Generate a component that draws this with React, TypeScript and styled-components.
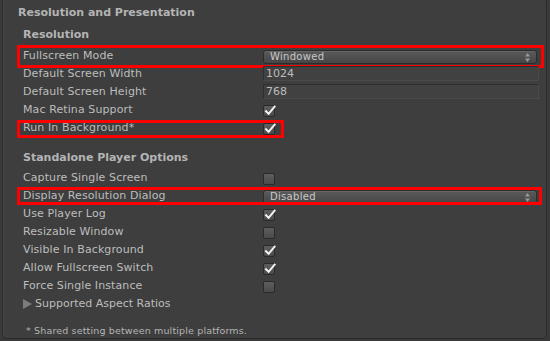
import React from 'react'
import styled, { createGlobalStyle, css } from 'styled-components'

const GlobalStyle = createGlobalStyle`
  html, body {
    margin: 0;
    padding: 0;
    background: #3a3a3a;
    overflow: hidden;
  }
  body {
    font-family: 'DejaVu Sans', 'Liberation Sans', sans-serif;
    font-size: 11px;
    color: #bdbdbd;
  }
`

const Panel = styled.div`
  box-sizing: border-box;
  width: 545px;
  height: 341px;
  margin: -2px 0 0 2px;
  background: #3e3e3e;
  border: 1px solid #2a2a2a;
  border-radius: 4px;
  box-shadow: inset 1px 1px 0 #474747;
  padding: 5px 0 0 14px;
`

const SectionTitle = styled.div`
  height: 22px;
  line-height: 18px;
  font-weight: bold;
  color: #b4b4b4;
  padding-left: 1px;
`

const GroupTitle = styled.div<{ $h: number }>`
  height: ${({ $h }) => $h}px;
  line-height: 18px;
  font-weight: bold;
  color: #b4b4b4;
  padding-left: 6px;
`

type Box = { top: number; bottom: number; width: number }

const Row = styled.div<{ $box?: Box }>`
  position: relative;
  display: flex;
  align-items: center;
  height: 18px;
  line-height: 18px;
  padding-left: 6px;
  width: 522px;

  ${({ $box }) =>
    $box &&
    css`
      &::after {
        content: '';
        position: absolute;
        left: 0;
        top: ${$box.top}px;
        bottom: ${$box.bottom}px;
        width: ${$box.width}px;
        box-sizing: border-box;
        border: 3px solid #ff0000;
        pointer-events: none;
      }
    `}
`

const Label = styled.div`
  width: 240px;
  flex: none;
  white-space: nowrap;
  letter-spacing: 0.1px;
`

const Value = styled.div`
  flex: 1;
  display: flex;
  align-items: center;
  height: 18px;
`

const Dropdown = styled.div`
  box-sizing: border-box;
  position: relative;
  width: 274px;
  height: 14px;
  margin-top: 1px;
  padding-left: 6px;
  font-size: 10px;
  line-height: 12px;
  color: #c8c8c8;
  letter-spacing: 0.3px;
  background: linear-gradient(#5a5a5a, #464646);
  border: 1px solid #2c2c2c;
  border-radius: 3px;
  box-shadow: inset 0 1px 0 #666;
`

const Arrows = styled.svg`
  position: absolute;
  right: 6px;
  top: 2px;
`

const Field = styled.div`
  box-sizing: border-box;
  width: 276px;
  height: 15px;
  margin-top: -1px;
  padding-left: 2px;
  line-height: 13px;
  background: #414141;
  border: 1px solid #2e2e2e;
  border-bottom-color: #4a4a4a;
  border-right-color: #4a4a4a;
`

const CheckBox = styled.div`
  box-sizing: border-box;
  width: 12px;
  height: 12px;
  margin-top: 2px;
  border: 1px solid #2a2a2a;
  border-radius: 2px;
  background: linear-gradient(#5e5e5e, #4a4a4a);
  position: relative;
`

const Foldout = styled.div`
  display: flex;
  align-items: center;
  gap: 3px;
`

const Note = styled.div`
  margin-top: 11px;
  padding-left: 9px;
  font-size: 9.5px;
  letter-spacing: 0.15px;
  line-height: 14px;
  color: #b4b4b4;
`

const Spacer = styled.div<{ $h: number }>`
  height: ${({ $h }) => $h}px;
`

const Tick = () => (
  <svg width="12" height="12" viewBox="0 0 12 12" style={{ position: 'absolute', left: 0, top: -1 }}>
    <path d="M2 6.2 L4.6 8.8 L10.6 1.6" fill="none" stroke="#f2f2f2" strokeWidth="2" strokeLinecap="square" />
  </svg>
)

const Check = ({ on }: { on?: boolean }) => <CheckBox>{on && <Tick />}</CheckBox>

const Popup = ({ text }: { text: string }) => (
  <Dropdown>
    {text}
    <Arrows width="5" height="9" viewBox="0 0 5 9">
      <path d="M2.5 0 L5 3.5 L0 3.5 Z M2.5 9 L5 5.5 L0 5.5 Z" fill="#9a9a9a" />
    </Arrows>
  </Dropdown>
)

const App = () => (
  <>
    <GlobalStyle />
    <Panel>
      <SectionTitle>Resolution and Presentation</SectionTitle>
      <GroupTitle $h={21}>Resolution</GroupTitle>
      <Row $box={{ top: -2, bottom: -3, width: 527 }}>
        <Label>Fullscreen Mode</Label>
        <Value>
          <Popup text="Windowed" />
        </Value>
      </Row>
      <Row>
        <Label>Default Screen Width</Label>
        <Value>
          <Field>1024</Field>
        </Value>
      </Row>
      <Row>
        <Label>Default Screen Height</Label>
        <Value>
          <Field>768</Field>
        </Value>
      </Row>
      <Row>
        <Label>Mac Retina Support</Label>
        <Value>
          <Check on />
        </Value>
      </Row>
      <Row $box={{ top: 1, bottom: -1, width: 267 }}>
        <Label>Run In Background*</Label>
        <Value>
          <Check on />
        </Value>
      </Row>
      <Spacer $h={12} />
      <GroupTitle $h={20}>Standalone Player Options</GroupTitle>
      <Row>
        <Label>Capture Single Screen</Label>
        <Value>
          <Check />
        </Value>
      </Row>
      <Row $box={{ top: 0, bottom: 0, width: 525 }}>
        <Label>Display Resolution Dialog</Label>
        <Value>
          <Popup text="Disabled" />
        </Value>
      </Row>
      <Row>
        <Label>Use Player Log</Label>
        <Value>
          <Check on />
        </Value>
      </Row>
      <Row>
        <Label>Resizable Window</Label>
        <Value>
          <Check />
        </Value>
      </Row>
      <Row>
        <Label>Visible In Background</Label>
        <Value>
          <Check on />
        </Value>
      </Row>
      <Row>
        <Label>Allow Fullscreen Switch</Label>
        <Value>
          <Check on />
        </Value>
      </Row>
      <Row>
        <Label>Force Single Instance</Label>
        <Value>
          <Check />
        </Value>
      </Row>
      <Row>
        <Foldout>
          <svg width="9" height="10" viewBox="0 0 9 10">
            <path d="M0 0 L9 5 L0 10 Z" fill="#7c7c7c" />
          </svg>
          Supported Aspect Ratios
        </Foldout>
      </Row>
      <Note>* Shared setting between multiple platforms.</Note>
    </Panel>
  </>
)

export default App
